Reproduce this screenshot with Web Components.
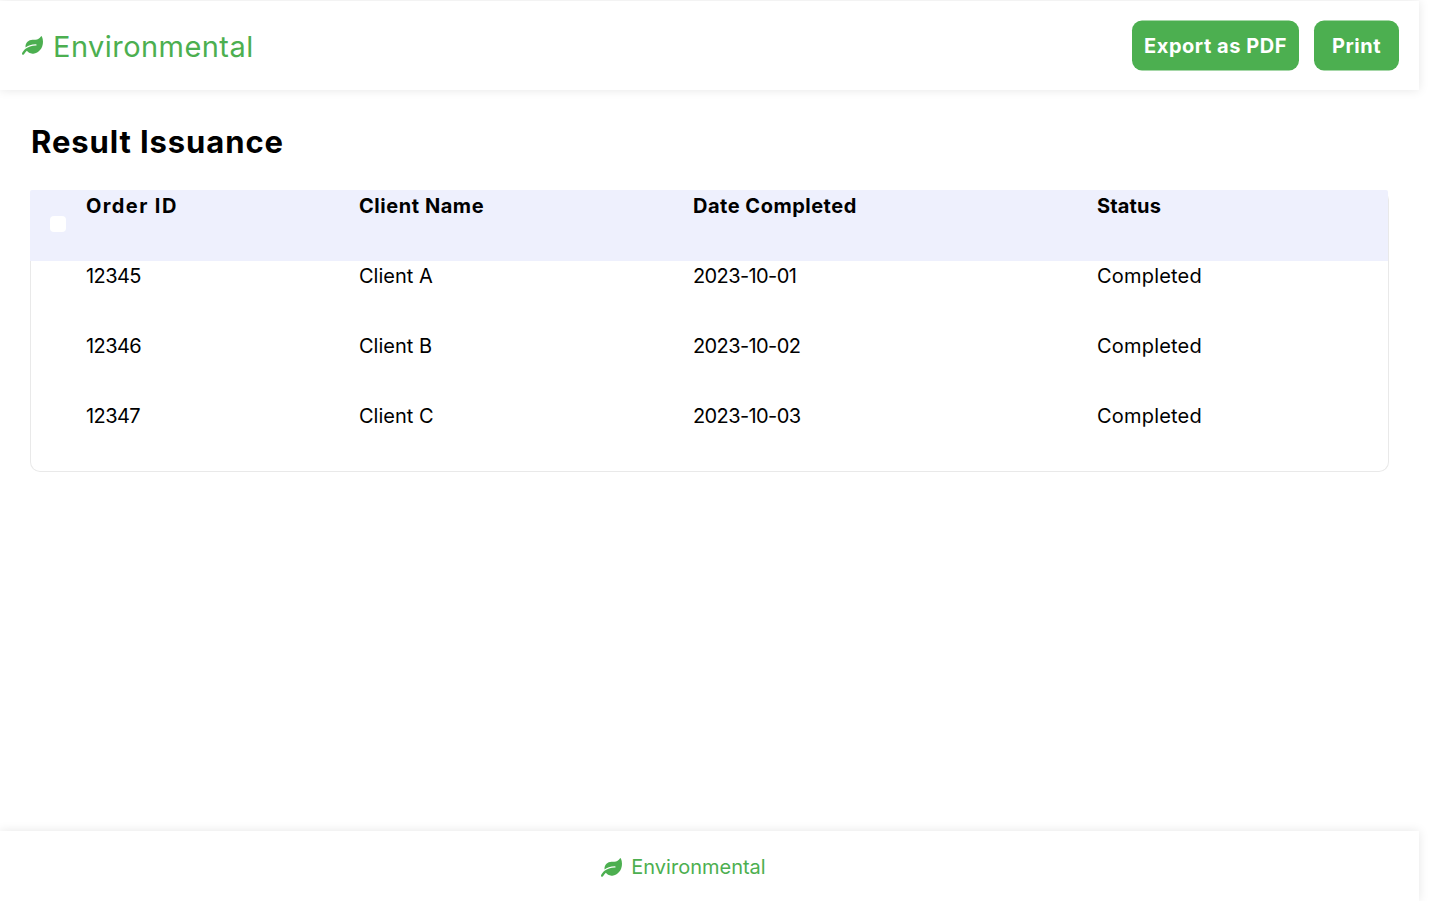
<!DOCTYPE html>
<html lang="en">
<head>
<meta charset="utf-8">
<title>Result Issuance</title>
<style>
  html, body { margin: 0; background: #fff; }
  body { font-family: "Inter", "Liberation Sans", sans-serif; color: #000; overflow: hidden; }
</style>
</head>
<body>
<app-shell>
  <app-header slot="header">
    <app-button>Export as PDF</app-button>
    <app-button>Print</app-button>
  </app-header>
  <result-table></result-table>
  <app-footer slot="footer"></app-footer>
</app-shell>

<script>
const LEAF = `<svg viewBox="0 0 576 512" aria-hidden="true"><path fill="currentColor" d="M546.2 9.7c-5.6-12.5-21.6-13-28.3-1.2C486.9 62.4 431.4 96 368 96h-80C182 96 96 182 96 288c0 7 .8 13.7 1.5 20.5C161.3 262.8 253.4 224 384 224c8.8 0 16 7.2 16 16s-7.2 16-16 16C132.6 256 26 410.1 2.4 468c-6.6 16.3 1.2 34.9 17.5 41.6 16.4 6.8 35-1.1 41.8-17.3 1.5-3.6 20.9-47.9 71.9-90.6 32.4 43.9 94 85.8 174.9 77.2C465.5 467.5 576 326.7 576 154.3c0-50.2-10.8-102.2-29.8-144.6z"/></svg>`;

class AppShell extends HTMLElement {
  connectedCallback() {
    this.attachShadow({ mode: 'open' });
    this.shadowRoot.innerHTML = `
      <style>
        :host { display: flex; flex-direction: column; width: 1419px; height: 901px; }
        main { flex: 1; padding: 0 30px; min-height: 0; }
        h1 { margin: 0; padding: 33px 0 0 1px; height: 100px; box-sizing: border-box; font-size: 31px; line-height: 38px; font-weight: 700; letter-spacing: .9px; }
      </style>
      <slot name="header"></slot>
      <main>
        <h1>Result Issuance</h1>
        <slot></slot>
      </main>
      <slot name="footer"></slot>
    `;
  }
}

class AppHeader extends HTMLElement {
  connectedCallback() {
    this.attachShadow({ mode: 'open' });
    this.shadowRoot.innerHTML = `
      <style>
        :host { display: flex; align-items: center; justify-content: space-between; height: 89px; margin-top: 1px; padding: 0 20px 0 22px; background: #fff; box-shadow: 0 0 10px rgba(0, 0, 0, 0.1); }
        .brand { display: flex; align-items: center; gap: 10px; color: #4caf50; font-size: 29px; line-height: 36px; letter-spacing: .45px; }
        .brand span { padding-top: 2px; }
        svg { width: 21px; height: 19px; }
        .actions { display: flex; gap: 15px; }
      </style>
      <div class="brand">${LEAF}<span>Environmental</span></div>
      <div class="actions"><slot></slot></div>
    `;
  }
}

class AppButton extends HTMLElement {
  connectedCallback() {
    this.attachShadow({ mode: 'open' });
    this.shadowRoot.innerHTML = `
      <style>
        :host { display: block; }
        button { display: block; min-width: 85px; height: 50px; padding: 0 12px; border: 0; border-radius: 10px; background: #4caf50; color: #fff; font: 700 20px "Inter", "Liberation Sans", sans-serif; letter-spacing: .54px; transform: translateY(-.5px); }
      </style>
      <button><slot></slot></button>
    `;
  }
}

class ResultTable extends HTMLElement {
  connectedCallback() {
    // spacing per cell: the installed font runs narrower or wider than the original per word
    const heads = [['Order ID', 1.4], ['Client Name', .55], ['Date Completed', .5], ['Status', .15]];
    const rows = [
      ['12345', 'Client A', '2023-10-01', 'Completed'],
      ['12346', 'Client B', '2023-10-02', 'Completed'],
      ['12347', 'Client C', '2023-10-03', 'Completed'],
    ];
    const spacing = [-.6, 0, -.6, .2];
    this.attachShadow({ mode: 'open' });
    this.shadowRoot.innerHTML = `
      <style>
        :host { display: block; height: 282px; box-sizing: border-box; border: 1px solid #e9e9e9; border-top: 0; border-radius: 10px; font-size: 20px; line-height: 28px; }
        .row { display: grid; grid-template-columns: 55px 273px 334px 404px 1fr; height: 70px; }
        .row > div { padding-top: 1px; }
        .head { height: 71px; margin-left: -1px; padding-left: 1px; background: #eef0fd; border-radius: 2px 2px 0 0; font-weight: 700; }
        .head > div { padding-top: 2px; }
        .box { width: 16px; height: 16px; margin: 24px 0 0 19px; padding: 0 !important; border-radius: 4px; background: #fff; }
      </style>
      <div class="row head">
        <div><div class="box"></div></div>
        ${heads.map(([t, s]) => `<div style="letter-spacing:${s}px">${t}</div>`).join('')}
      </div>
      ${rows.map(r => `<div class="row body"><div></div>${r.map((c, i) => `<div style="letter-spacing:${spacing[i]}px">${c}</div>`).join('')}</div>`).join('')}
    `;
  }
}

class AppFooter extends HTMLElement {
  connectedCallback() {
    this.attachShadow({ mode: 'open' });
    this.shadowRoot.innerHTML = `
      <style>
        :host { display: flex; align-items: center; justify-content: center; gap: 9px; height: 70px; box-sizing: border-box; padding: 2px 52px 0 0; background: #fff; box-shadow: 0 0 10px rgba(0, 0, 0, 0.1); color: #4caf50; font-size: 20px; }
        svg { width: 21px; height: 19px; }
      </style>
      ${LEAF}<span>Environmental</span>
    `;
  }
}

customElements.define('app-shell', AppShell);
customElements.define('app-header', AppHeader);
customElements.define('app-button', AppButton);
customElements.define('result-table', ResultTable);
customElements.define('app-footer', AppFooter);
</script>
</body>
</html>
